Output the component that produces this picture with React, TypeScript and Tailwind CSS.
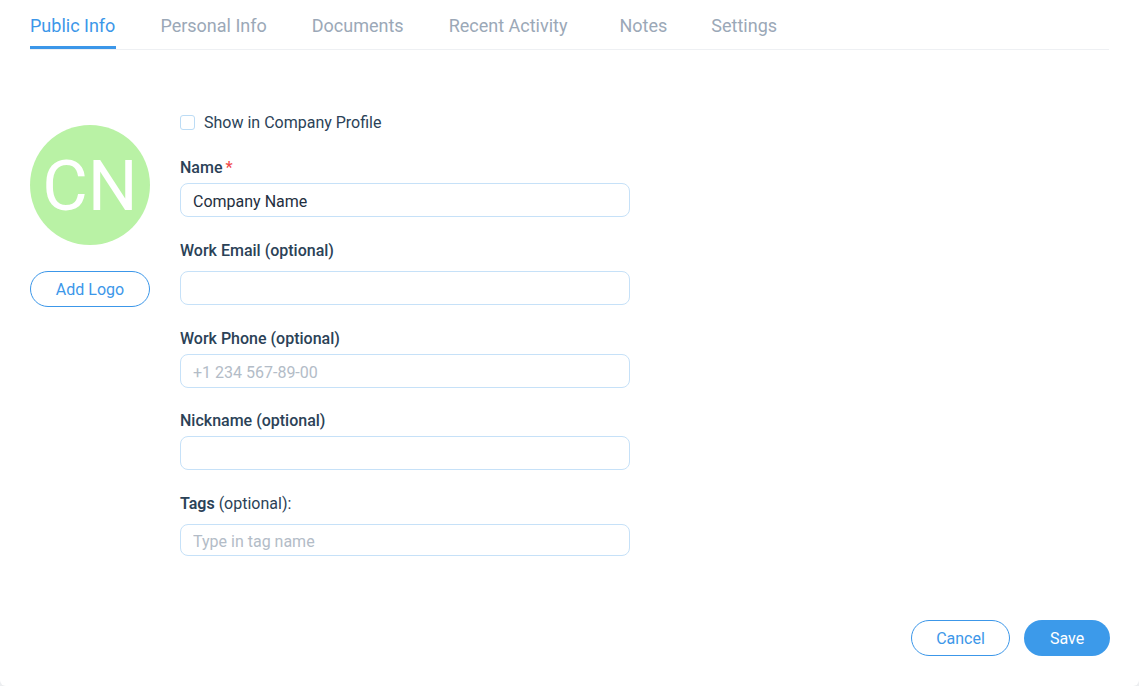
const TABS = ['Public Info', 'Personal Info', 'Documents', 'Recent Activity', 'Notes', 'Settings'];

const inputCls =
  'block w-[450px] rounded-[8px] border border-[#c6e1f8] bg-white px-[12px] pt-[2px] text-[16px] text-[#1f2f40] outline-none placeholder:text-[#b3bcc7]';

function Label({ children, className = '' }: { children: React.ReactNode; className?: string }) {
  return <div className={`text-[16px] leading-[19px] font-medium text-[#2b4257] ${className}`}>{children}</div>;
}

export default function App() {
  return (
    <div className="h-[686px] w-[1139px] bg-[#eceef0]" style={{ fontFamily: 'Roboto, "Liberation Sans", sans-serif' }}>
      <div className="flex h-full flex-col rounded-b-[6px] bg-white pl-[30px] pr-[29px]">
        {/* tabs */}
        <div className="mr-[1px] flex h-[50px] gap-[45px] border-b border-[#eef0f3]">
          {TABS.map((t, i) => (
            <div
              key={t}
              className={`relative pt-[15px] text-[18px] leading-[22px] ${i === 0 ? 'text-[#3c97e9]' : 'text-[#9ba8b7]'} ${t === 'Notes' ? 'ml-[7px]' : ''} ${t === 'Settings' ? '-ml-[1px]' : ''}`}
            >
              {t}
              {i === 0 && <span className="absolute -right-[1px] left-0 top-[46px] h-[3px] bg-[#3c97e9]" />}
            </div>
          ))}
        </div>

        <div className="flex gap-[30px]">
          {/* avatar */}
          <div className="mt-[75px] flex w-[120px] flex-col items-center">
            <div className="flex h-[120px] w-[120px] items-center justify-center rounded-full bg-[#b9f2a5] pt-[2px] text-[70px] leading-none text-white">
              CN
            </div>
            <button className="mt-[26px] h-[36px] w-[120px] rounded-full border border-[#3c97e9] pt-[1px] text-[16px] text-[#3c97e9]">
              Add Logo
            </button>
          </div>

          {/* form */}
          <div className="mt-[63px] flex flex-col">
            <label className="flex items-center gap-[9px] text-[16px] leading-[19px] text-[#2b4257]">
              <span className="h-[15px] w-[15px] rounded-[3px] border border-[#bcdcf5]" />
              Show in Company Profile
            </label>

            <Label className="mt-[26px]">
              Name<span className="ml-[3px] text-[#f04a4a]">*</span>
            </Label>
            <input className={`${inputCls} mt-[6px] h-[34px]`} defaultValue="Company Name" />

            <Label className="mt-[24px]">Work Email (optional)</Label>
            <input className={`${inputCls} mt-[11px] h-[34px]`} />

            <Label className="mt-[24px]">Work Phone (optional)</Label>
            <input className={`${inputCls} mt-[6px] h-[34px]`} placeholder="+1 234 567-89-00" />

            <Label className="mt-[23px]">Nickname (optional)</Label>
            <input className={`${inputCls} mt-[6px] h-[34px]`} />

            <div className="mt-[24px] text-[16px] leading-[19px] text-[#2b4257]">
              <span className="font-semibold">Tags</span> (optional):
            </div>
            <input className={`${inputCls} mt-[11px] h-[32px]`} placeholder="Type in tag name" />
          </div>
        </div>

        <div className="mt-[64px] flex justify-end gap-[14px]">
          <button className="h-[36px] w-[99px] rounded-full border border-[#3c97e9] pt-[1px] text-[16px] text-[#3c97e9]">Cancel</button>
          <button className="h-[36px] w-[86px] rounded-full bg-[#3c9aea] pt-[1px] text-[16px] text-white">Save</button>
        </div>
      </div>
    </div>
  );
}
